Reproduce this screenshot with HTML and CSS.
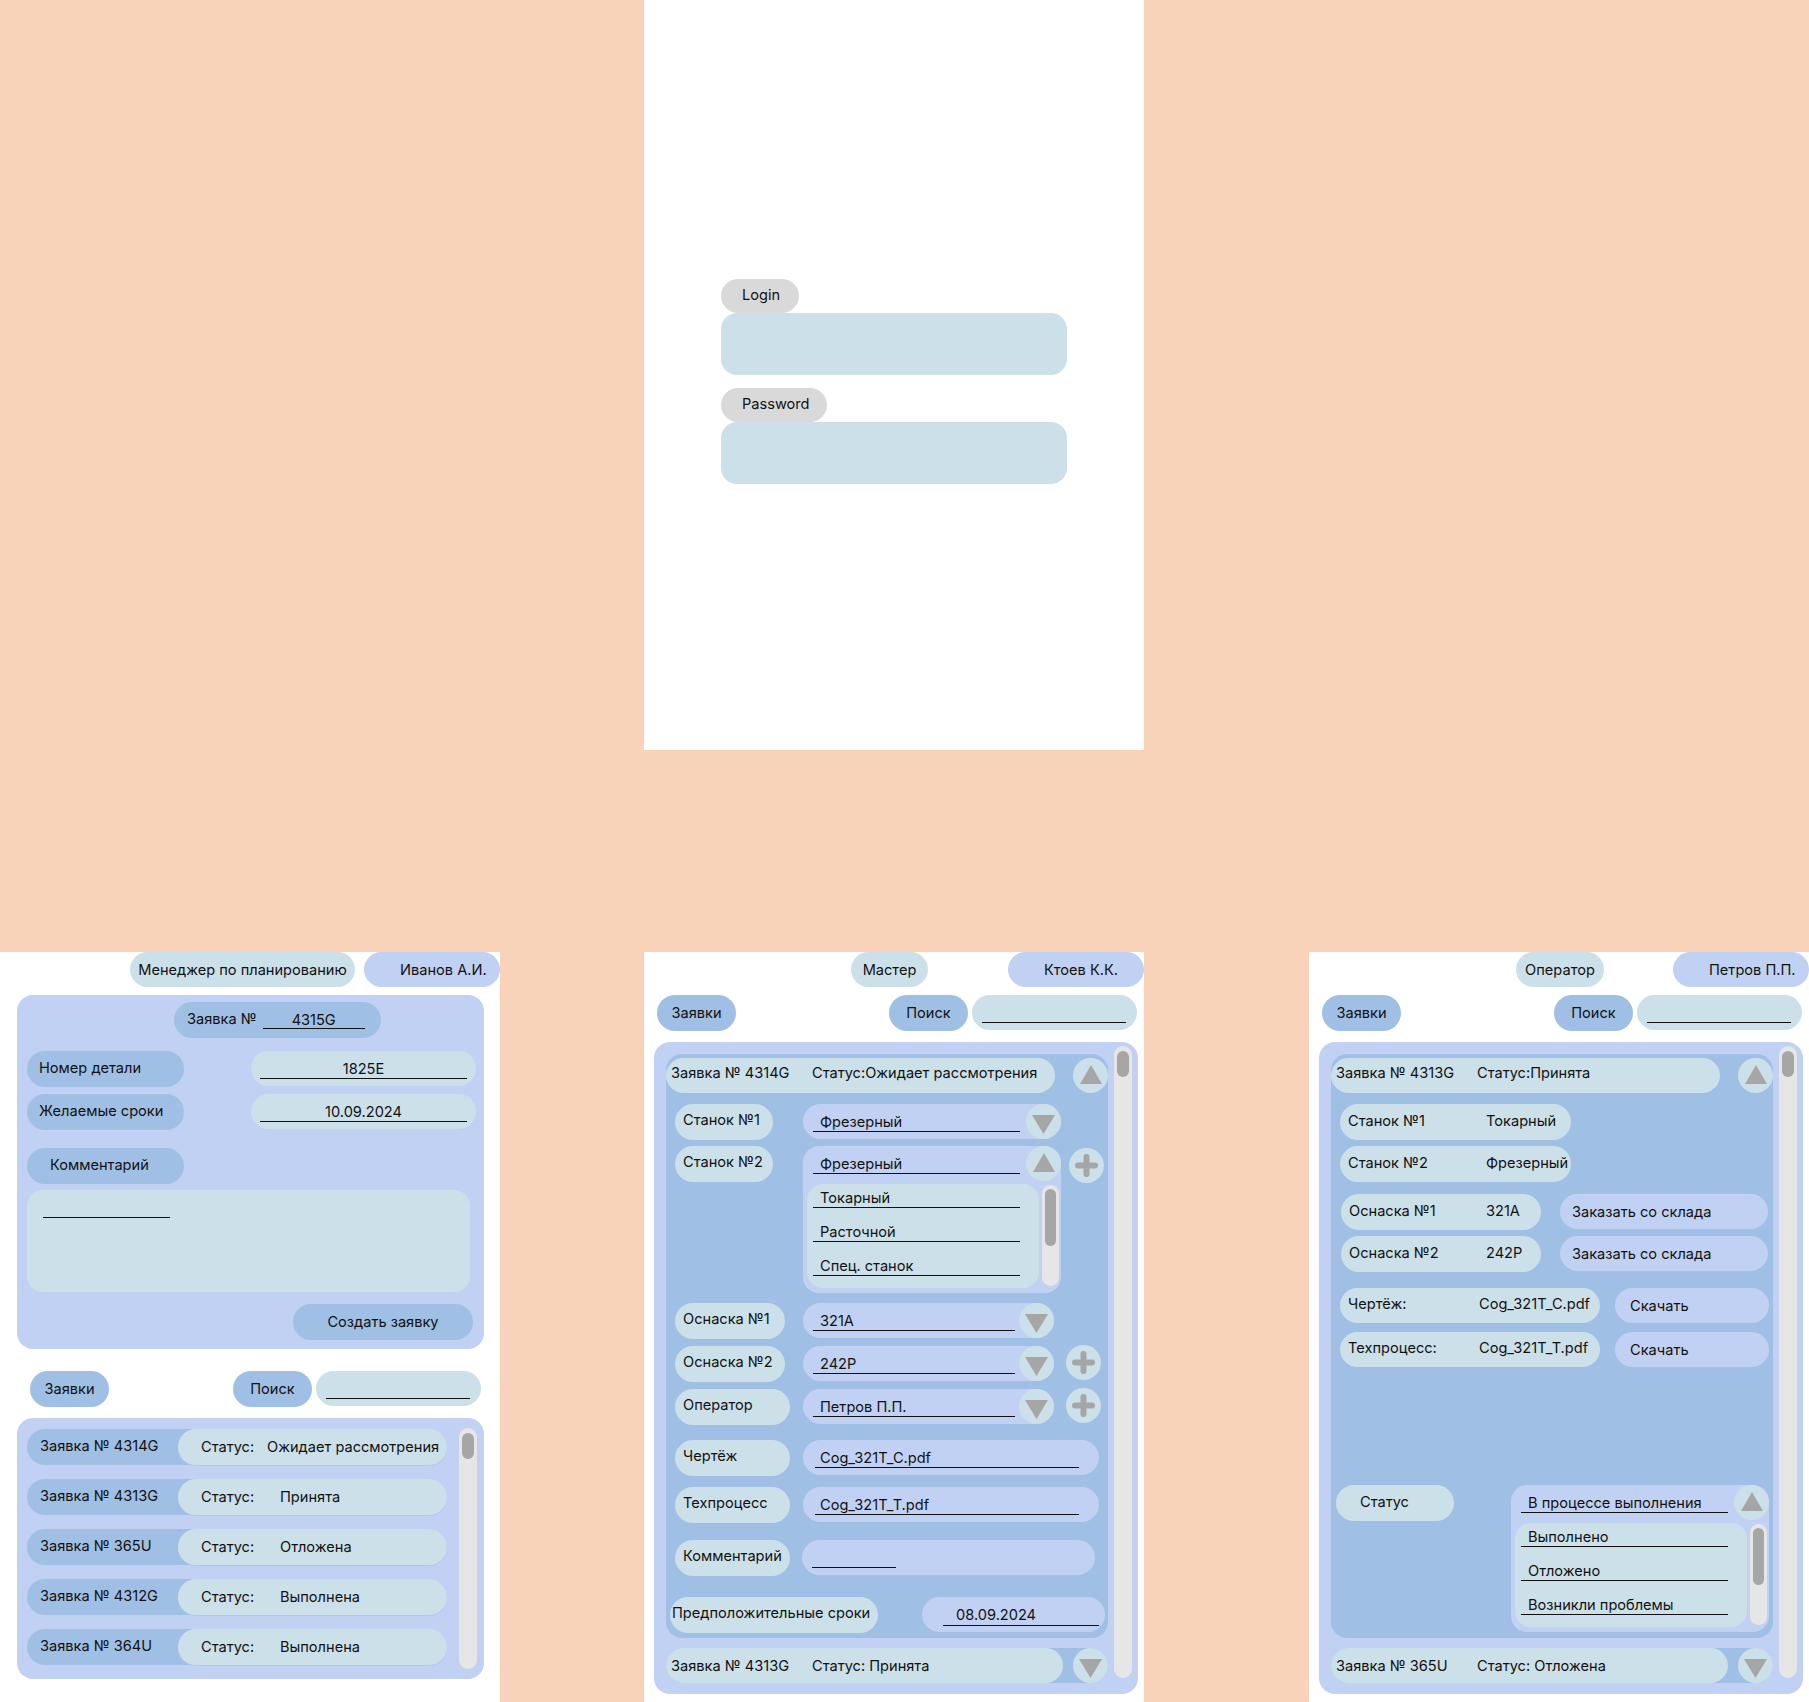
FILE: index.html
```html
<!DOCTYPE html>
<html lang="ru">
<head>
  <meta charset="UTF-8" />
  <title>Заявки на производство</title>
  <meta name="viewport" content="width=device-width, initial-scale=1.0"/>
  <link rel="stylesheet" href="styles.css">
</head>
<body>
<div class="page">

  <!-- вход -->
  <section class="panel login-panel">
    <span class="login-label">Login</span>
    <div class="login-input"></div>
    <span class="login-label">Password</span>
    <div class="login-input"></div>
  </section>

  <!-- менеджер -->
  <section class="panel manager">
    <header class="user-bar">
      <span class="pill role">Менеджер по планированию</span>
      <span class="pill user">Иванов А.И.</span>
    </header>

    <div class="new-order">
      <div class="pill order-no">
        <span>Заявка №</span>
        <span class="line line-center order-line">4315G</span>
      </div>
      <div class="form-row">
        <span class="pill form-label">Номер детали</span>
        <span class="pill form-value"><span class="line line-center">1825E</span></span>
      </div>
      <div class="form-row form-row-near">
        <span class="pill form-label">Желаемые сроки</span>
        <span class="pill form-value"><span class="line line-center">10.09.2024</span></span>
      </div>
      <div class="form-row form-row-far">
        <span class="pill form-label form-label-indent">Комментарий</span>
      </div>
      <div class="comment-box"><span class="line comment-line"></span></div>
      <button class="pill create-btn">Создать заявку</button>
    </div>

    <div class="toolbar">
      <span class="pill tab">Заявки</span>
      <span class="pill search-btn">Поиск</span>
      <span class="search"><span class="line search-line"></span></span>
    </div>

    <div class="order-list">
      <ul class="orders">
        <li class="order"><span class="order-num">Заявка № 4314G</span><span class="order-status"><span class="status-key status-key-short">Статус:</span>Ожидает рассмотрения</span></li>
        <li class="order"><span class="order-num">Заявка № 4313G</span><span class="order-status"><span class="status-key">Статус:</span>Принята</span></li>
        <li class="order"><span class="order-num">Заявка № 365U</span><span class="order-status"><span class="status-key">Статус:</span>Отложена</span></li>
        <li class="order"><span class="order-num">Заявка № 4312G</span><span class="order-status"><span class="status-key">Статус:</span>Выполнена</span></li>
        <li class="order"><span class="order-num">Заявка № 364U</span><span class="order-status"><span class="status-key">Статус:</span>Выполнена</span></li>
      </ul>
      <div class="scroll list-scroll"><div class="thumb"></div></div>
    </div>
  </section>

  <!-- мастер -->
  <section class="panel master">
    <header class="user-bar">
      <span class="pill role">Мастер</span>
      <span class="pill user">Ктоев К.К.</span>
    </header>

    <div class="toolbar">
      <span class="pill tab">Заявки</span>
      <span class="pill search-btn">Поиск</span>
      <span class="search"><span class="line search-line"></span></span>
    </div>

    <div class="board">
      <div class="board-main">
        <div class="card">
          <div class="card-head">
            <span class="head-pill"><span class="head-num">Заявка № 4314G</span>Статус:Ожидает рассмотрения</span>
            <span class="round"><svg class="up" width="22" height="19" viewBox="0 0 22 19"><path d="M11 0L22 19H0Z" fill="#a6a6a6"/></svg></span>
          </div>

          <div class="group group-machines">
            <div class="field-row">
              <span class="tag tag-s">Станок №1</span>
              <span class="select">
                <span class="line select-line">Фрезерный</span>
                <span class="round"><svg class="down" width="23" height="19" viewBox="0 0 23 19"><path d="M0 0H23L11.5 19Z" fill="#a6a6a6"/></svg></span>
              </span>
            </div>
            <div class="field-row">
              <span class="tag tag-s">Станок №2</span>
              <div class="dropdown">
                <div class="dropdown-top">
                  <span class="line select-line">Фрезерный</span>
                  <span class="round"><svg class="up" width="22" height="19" viewBox="0 0 22 19"><path d="M11 0L22 19H0Z" fill="#a6a6a6"/></svg></span>
                </div>
                <div class="dropdown-body">
                  <ul class="options">
                    <li class="opt">Токарный</li>
                    <li class="opt">Расточной</li>
                    <li class="opt">Спец. станок</li>
                  </ul>
                  <div class="scroll mini-scroll"><div class="thumb"></div></div>
                </div>
              </div>
              <span class="round add"><svg width="23" height="23" viewBox="0 0 23 23"><path d="M11.5 3V20M3 11.5H20" stroke="#a6a6a6" stroke-width="6" stroke-linecap="round"/></svg></span>
            </div>
          </div>

          <div class="group group-tools">
            <div class="field-row">
              <span class="tag tag-m">Оснаска №1</span>
              <span class="select select-narrow">
                <span class="line select-line">321A</span>
                <span class="round"><svg class="down" width="23" height="19" viewBox="0 0 23 19"><path d="M0 0H23L11.5 19Z" fill="#a6a6a6"/></svg></span>
              </span>
            </div>
            <div class="field-row">
              <span class="tag tag-m">Оснаска №2</span>
              <span class="select select-narrow">
                <span class="line select-line">242P</span>
                <span class="round"><svg class="down" width="23" height="19" viewBox="0 0 23 19"><path d="M0 0H23L11.5 19Z" fill="#a6a6a6"/></svg></span>
              </span>
              <span class="round add"><svg width="23" height="23" viewBox="0 0 23 23"><path d="M11.5 3V20M3 11.5H20" stroke="#a6a6a6" stroke-width="6" stroke-linecap="round"/></svg></span>
            </div>
            <div class="field-row">
              <span class="tag tag-l">Оператор</span>
              <span class="select select-narrow">
                <span class="line select-line">Петров П.П.</span>
                <span class="round"><svg class="down" width="23" height="19" viewBox="0 0 23 19"><path d="M0 0H23L11.5 19Z" fill="#a6a6a6"/></svg></span>
              </span>
              <span class="round add"><svg width="23" height="23" viewBox="0 0 23 23"><path d="M11.5 3V20M3 11.5H20" stroke="#a6a6a6" stroke-width="6" stroke-linecap="round"/></svg></span>
            </div>
          </div>

          <div class="group group-docs">
            <div class="field-row">
              <span class="tag tag-l">Чертёж</span>
              <span class="doc-field"><span class="line doc-line">Cog_321T_C.pdf</span></span>
            </div>
            <div class="field-row">
              <span class="tag tag-l">Техпроцесс</span>
              <span class="doc-field"><span class="line doc-line">Cog_321T_T.pdf</span></span>
            </div>
          </div>

          <div class="field-row comment-row">
            <span class="tag tag-l">Комментарий</span>
            <span class="doc-field doc-comment"><span class="line doc-comment-line"></span></span>
          </div>

          <div class="date-row">
            <span class="tag date-tag">Предположительные сроки</span>
            <span class="date-field"><span class="line date-line">08.09.2024</span></span>
          </div>
        </div>

        <div class="collapsed">
          <span class="head-pill collapsed-pill"><span class="head-num">Заявка № 4313G</span>Статус: Принята</span>
          <span class="round"><svg class="down" width="23" height="19" viewBox="0 0 23 19"><path d="M0 0H23L11.5 19Z" fill="#a6a6a6"/></svg></span>
        </div>
      </div>
      <div class="scroll board-scroll"><div class="thumb"></div></div>
    </div>
  </section>

  <!-- оператор -->
  <section class="panel operator">
    <header class="user-bar">
      <span class="pill role">Оператор</span>
      <span class="pill user">Петров П.П.</span>
    </header>

    <div class="toolbar">
      <span class="pill tab">Заявки</span>
      <span class="pill search-btn">Поиск</span>
      <span class="search"><span class="line search-line"></span></span>
    </div>

    <div class="board">
      <div class="board-main">
        <div class="card card-operator">
          <div class="card-head">
            <span class="head-pill"><span class="head-num">Заявка № 4313G</span>Статус:Принята</span>
            <span class="round"><svg class="up" width="22" height="19" viewBox="0 0 22 19"><path d="M11 0L22 19H0Z" fill="#a6a6a6"/></svg></span>
          </div>

          <div class="group group-machines">
            <span class="info info-machine"><span class="info-key">Станок №1</span>Токарный</span>
            <span class="info info-machine"><span class="info-key">Станок №2</span>Фрезерный</span>
          </div>

          <div class="group group-order">
            <div class="info-row">
              <span class="info info-tool"><span class="info-key">Оснаска №1</span>321A</span>
              <span class="action action-order">Заказать со склада</span>
            </div>
            <div class="info-row">
              <span class="info info-tool"><span class="info-key">Оснаска №2</span>242P</span>
              <span class="action action-order">Заказать со склада</span>
            </div>
          </div>

          <div class="group group-files">
            <div class="info-row">
              <span class="info info-doc"><span class="info-key">Чертёж:</span>Cog_321T_C.pdf</span>
              <span class="action action-get">Скачать</span>
            </div>
            <div class="info-row">
              <span class="info info-doc"><span class="info-key">Техпроцесс:</span>Cog_321T_T.pdf</span>
              <span class="action action-get">Скачать</span>
            </div>
          </div>

          <div class="status-row">
            <span class="tag status-tag">Статус</span>
            <div class="dropdown">
              <div class="dropdown-top">
                <span class="line select-line">В процессе выполнения</span>
                <span class="round"><svg class="up" width="22" height="19" viewBox="0 0 22 19"><path d="M11 0L22 19H0Z" fill="#a6a6a6"/></svg></span>
              </div>
              <div class="dropdown-body">
                <ul class="options">
                  <li class="opt">Выполнено</li>
                  <li class="opt">Отложено</li>
                  <li class="opt">Возникли проблемы</li>
                </ul>
                <div class="scroll mini-scroll"><div class="thumb"></div></div>
              </div>
            </div>
          </div>
        </div>

        <div class="collapsed">
          <span class="head-pill collapsed-pill"><span class="head-num">Заявка № 365U</span>Статус: Отложена</span>
          <span class="round"><svg class="down" width="23" height="19" viewBox="0 0 23 19"><path d="M0 0H23L11.5 19Z" fill="#a6a6a6"/></svg></span>
        </div>
      </div>
      <div class="scroll board-scroll"><div class="thumb"></div></div>
    </div>
  </section>

</div>
</body>
</html>
```

FILE: styles.css
```css
* { box-sizing: border-box; }
html, body { margin: 0; background: #f8d3b9; }
body { font-family: Inter, "Noto Sans", sans-serif; font-size: 14.6px; color: #111; }
ul { margin: 0; padding: 0; list-style: none; }
button { font: inherit; color: inherit; border: 0; cursor: pointer; }

.page {
  display: grid;
  grid-template-columns: 500px 144px 500px 165px 500px;
  grid-template-rows: 750px 202px 750px;
  width: 1809px;
  height: 1702px;
}
.panel { background: #fff; }
.login-panel { grid-column: 3; grid-row: 1; }
.manager { grid-column: 1; grid-row: 3; }
.master { grid-column: 3; grid-row: 3; }
.operator { grid-column: 5; grid-row: 3; }

/* login */
.login-panel { display: flex; flex-direction: column; align-items: flex-start; padding: 279px 0 0 77px; }
.login-label { display: flex; align-items: center; height: 34px; padding: 0 0 2px 21px; border-radius: 17px; background: #d9d9d9; }
.login-label:first-child { width: 78px; }
.login-label + .login-input + .login-label { width: 106px; }
.login-input { width: 346px; height: 62px; margin-bottom: 13px; border-radius: 16px; background: #cce0ea; }

/* common */
.pill { display: flex; align-items: center; height: 36px; border-radius: 18px; white-space: nowrap; }
.line {
  display: block;
  align-self: flex-start;
  height: 28px;
  padding: 9px 0 0 7px;
  line-height: 18px;
  border-bottom: 1px solid #111;
  white-space: nowrap;
}
.line-center { text-align: center; padding-left: 0; }
.round {
  flex: none;
  display: flex;
  align-items: center;
  justify-content: center;
  width: 35px;
  height: 35px;
  border-radius: 50%;
  background: #cce0ea;
}
.round .up { margin-bottom: 3px; }
.round .down { margin-top: 6px; }
.scroll { flex: none; width: 18px; padding: 5px 3px; border-radius: 9px; background: #e6e6e6; }
.thumb { height: 26px; border-radius: 6px; background: #a6a6a6; }

/* header */
.user-bar { display: flex; justify-content: flex-end; height: 35px; }
.role { height: 35px; justify-content: center; background: #cce0ea; }
.user { width: 136px; height: 35px; padding-left: 36px; background: #c1d1f3; }
.manager .role { width: 225px; margin-right: 9px; }
.master .role { width: 77px; margin-right: 80px; }
.operator .role { width: 88px; margin-right: 69px; }

.toolbar { display: flex; align-items: flex-start; gap: 4px; }
.tab, .search-btn { width: 79px; justify-content: center; background: #a0bfe4; }
.tab { margin-right: auto; }
.search { display: flex; width: 165px; height: 35px; padding-left: 10px; border-radius: 18px; background: #cce0ea; }
.search-line { width: 144px; }
.manager .toolbar { margin-top: 22px; padding: 0 19px 0 30px; }
.master .toolbar, .operator .toolbar { margin-top: 8px; padding: 0 7px 0 13px; }

/* manager form */
.new-order {
  height: 354px;
  margin: 8px 16px 0 17px;
  padding: 7px 0 0 10px;
  border-radius: 16px;
  background: #c1d1f3;
}
.order-no { width: 207px; margin-left: 147px; padding: 0 0 2px 13px; background: #a0bfe4; }
.order-line { width: 102px; height: 27px; margin-left: 6px; }
.form-row { display: flex; margin-top: 13px; }
.form-row-near { margin-top: 7px; }
.form-row-far { margin-top: 18px; }
.form-label { width: 157px; padding: 0 0 2px 12px; background: #a0bfe4; }
.form-label-indent { padding-left: 23px; }
.form-value { width: 225px; height: 35px; margin-left: 67px; padding-left: 9px; background: #cce0ea; }
.form-value .line { width: 207px; }
.comment-box { width: 443px; height: 102px; margin-top: 6px; padding-left: 16px; border-radius: 16px; background: #cce0ea; }
.comment-line { width: 127px; }
.create-btn { width: 180px; margin: 12px 0 0 266px; justify-content: center; background: #a0bfe4; }

/* manager list */
.order-list {
  display: flex;
  align-items: flex-start;
  height: 261px;
  margin: 11px 16px 0 17px;
  padding: 10px 0 0 10px;
  border-radius: 16px;
  background: #c1d1f3;
}
.orders { display: flex; flex-direction: column; gap: 14px; width: 420px; margin-top: 1px; }
.order { display: flex; height: 36px; border-radius: 18px; background: #a0bfe4; }
.order-num { display: flex; align-items: center; width: 151px; padding: 0 0 3px 13px; }
.order-status {
  flex: 1;
  display: flex;
  align-items: center;
  padding-left: 23px;
  border-radius: 18px;
  background: #cce0ea;
  box-shadow: 0 1px 0 #afc8e8;
}
.status-key { width: 79px; }
.status-key-short { width: 66px; }
.list-scroll { height: 241px; margin-left: 12px; }

/* boards */
.board {
  display: flex;
  align-items: flex-start;
  width: 484px;
  height: 652px;
  margin: 11px 0 0 10px;
  padding: 4px 0 0 12px;
  border-radius: 16px;
  background: #c1d1f3;
}
.board-main { display: flex; flex-direction: column; gap: 10px; width: 442px; margin-top: 8px; }
.board-scroll { height: 632px; margin-left: 6px; }

.card {
  display: flex;
  flex-direction: column;
  height: 584px;
  padding: 4px 0 5px;
  border-radius: 16px;
  background: #a0bfe4;
}
.card-head, .collapsed { display: flex; justify-content: space-between; }
.head-pill {
  display: flex;
  align-items: center;
  width: 389px;
  height: 35px;
  padding-left: 5px;
  border-radius: 18px;
  background: #cce0ea;
  white-space: nowrap;
}
.card-head .head-pill { padding-bottom: 6px; }
.head-num { width: 141px; }
.collapsed { height: 35px; border-radius: 18px; background: #a0bfe4; }
.collapsed-pill { width: 397px; }

.group { display: flex; flex-direction: column; }
.group-machines { margin-top: 11px; gap: 6px; }
.group-tools { margin-top: 10px; gap: 7px; }
.group-docs { margin-top: 15px; gap: 11px; }
.comment-row { margin-top: 17px; }

.field-row {
  display: grid;
  grid-template-columns: 128px auto auto;
  justify-content: start;
  align-items: start;
  padding-left: 9px;
}
.tag {
  display: flex;
  align-items: center;
  height: 36px;
  padding: 0 0 4px 8px;
  border-radius: 18px;
  background: #cce0ea;
  white-space: nowrap;
}
.tag-s { width: 98px; }
.tag-m { width: 110px; }
.tag-l { width: 115px; }

.select {
  display: flex;
  align-items: flex-start;
  width: 258px;
  height: 35px;
  padding-left: 10px;
  border-radius: 18px;
  background: #c1d1f3;
}
.select-narrow { width: 251px; }
.select-line { width: 207px; }
.select-narrow .select-line { width: 202px; }
.select .round, .dropdown-top .round { margin-left: auto; }
.add { margin: 2px 0 0 8px; }
.select-narrow + .add { margin: -1px 0 0 12px; }

.dropdown { width: 258px; border-radius: 16px; background: #c1d1f3; }
.dropdown-top { display: flex; align-items: flex-start; height: 35px; padding-left: 10px; }
.dropdown-body { display: flex; gap: 3px; padding: 3px 2px 5px 4px; }
.options {
  display: flex;
  flex-direction: column;
  gap: 15px;
  width: 232px;
  height: 104px;
  padding: 5px 0 0 6px;
  border-radius: 16px;
  background: #cce0ea;
}
.opt { width: 207px; height: 19px; padding-left: 7px; line-height: 18px; border-bottom: 1px solid #111; }
.mini-scroll { width: 17px; height: 101px; margin-top: 1px; padding: 4px 3px; }
.mini-scroll .thumb { height: 57px; }

.doc-field {
  display: flex;
  width: 296px;
  height: 35px;
  padding-left: 12px;
  border-radius: 18px;
  background: #c1d1f3;
}
.doc-line { width: 264px; padding-left: 5px; }
.doc-comment { width: 293px; margin-left: -1px; padding-left: 10px; }
.doc-comment-line { width: 84px; }

.date-row { display: flex; margin-top: 21px; padding-left: 4px; }
.date-tag { width: 208px; padding: 0 0 4px 2px; }
.date-field {
  display: flex;
  width: 183px;
  height: 35px;
  margin-left: 44px;
  padding-left: 21px;
  border-radius: 18px;
  background: #c1d1f3;
}
.date-line { width: 156px; height: 29px; padding-left: 13px; }

/* operator card */
.card-operator { padding-bottom: 6px; }
.info {
  display: flex;
  align-items: center;
  height: 36px;
  padding: 0 0 3px 8px;
  border-radius: 18px;
  background: #cce0ea;
  white-space: nowrap;
}
.info-key { flex: none; }
.info-machine { width: 231px; margin-left: 9px; }
.info-machine .info-key { width: 138px; }
.info-tool { width: 200px; margin-left: 10px; }
.info-tool .info-key { width: 137px; }
.info-doc { width: 260px; height: 35px; margin-left: 9px; }
.info-doc .info-key { width: 131px; }
.group-order { margin-top: 12px; gap: 6px; }
.group-files { margin-top: 16px; gap: 9px; }
.info-row { display: flex; align-items: flex-start; }
.action {
  display: flex;
  align-items: center;
  height: 35px;
  border-radius: 18px;
  background: #c1d1f3;
  white-space: nowrap;
}
.action-order { width: 208px; margin-left: 19px; padding-left: 12px; }
.action-get { width: 154px; margin-left: 15px; padding-left: 15px; }

.status-row { display: flex; align-items: flex-start; margin-top: auto; padding-left: 5px; }
.status-tag { width: 118px; padding: 0 0 2px 24px; }
.status-row .dropdown { margin-left: 57px; }
```
